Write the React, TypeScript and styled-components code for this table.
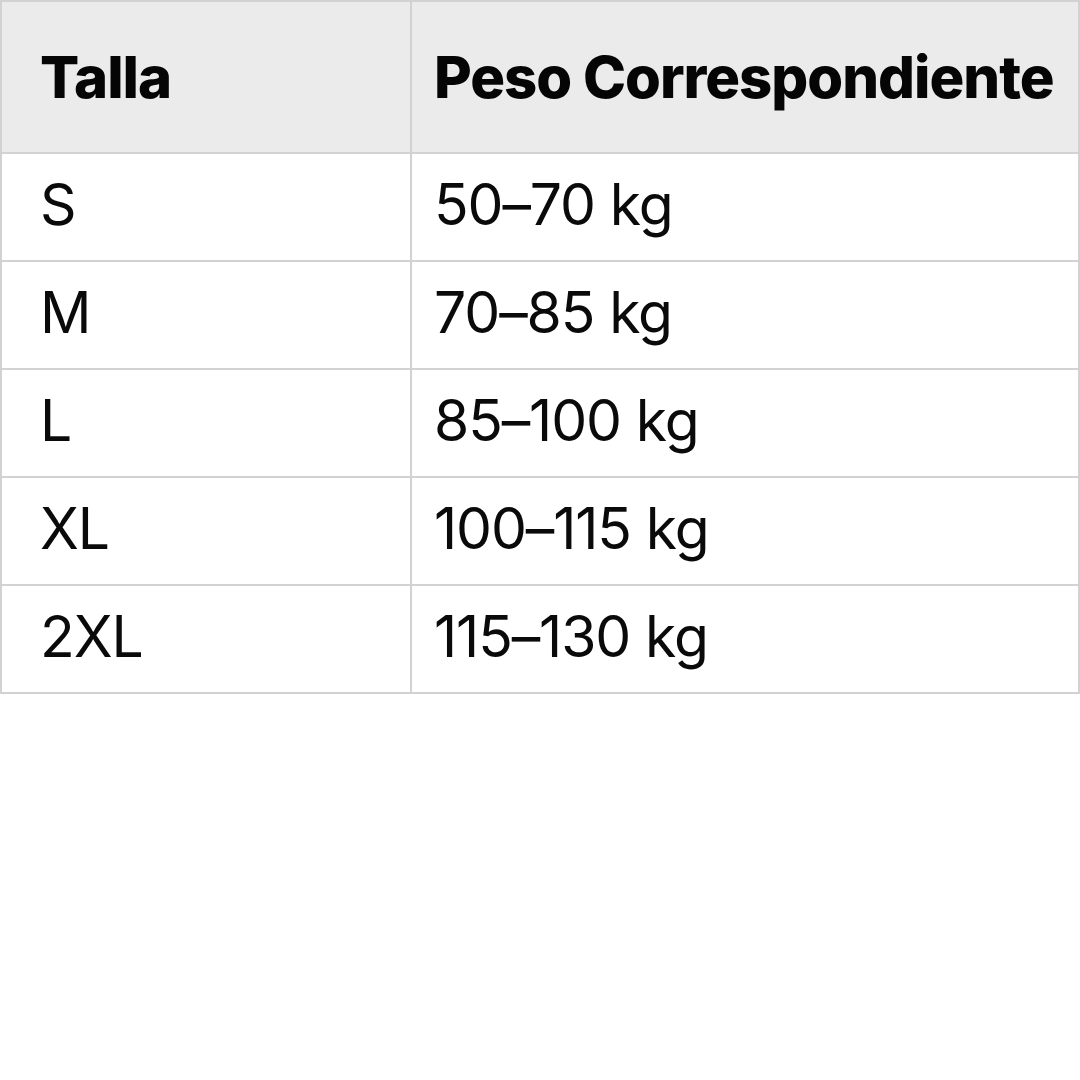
import React from 'react'
import styled, { createGlobalStyle } from 'styled-components'

const GlobalStyle = createGlobalStyle`
  html, body {
    margin: 0;
    padding: 0;
    background: #fff;
  }
  body {
    font-family: Inter, "Liberation Sans", sans-serif;
    color: #0a0a0a;
  }
`

const Page = styled.div`
  width: 1080px;
  height: 1080px;
  background: #fff;
`

const Table = styled.table`
  width: 1080px;
  border-collapse: collapse;
  table-layout: fixed;
  border: 2px solid #d2d2d2;
`

const Head = styled.th<{ first?: boolean }>`
  height: 150px;
  padding: 0 0 0 ${(p) => (p.first ? '38px' : '22px')};
  background: #ebebeb;
  border: 2px solid #d2d2d2;
  text-align: left;
  font-size: 58px;
  font-weight: 800;
  letter-spacing: -1px;
  color: #050505;
`

const Cell = styled.td<{ first?: boolean }>`
  height: 100px;
  padding: 0 0 6px ${(p) => (p.first ? '38px' : '22px')};
  border: 2px solid #d2d2d2;
  font-size: 57px;
  font-weight: 400;
  letter-spacing: -1.1px;
  color: #0a0a0a;
`

const rows = [
  ['S', '50–70 kg'],
  ['M', '70–85 kg'],
  ['L', '85–100 kg'],
  ['XL', '100–115 kg'],
  ['2XL', '115–130 kg'],
]

const App = () => (
  <Page>
    <GlobalStyle />
    <Table>
      <colgroup>
        <col style={{ width: 410 }} />
        <col />
      </colgroup>
      <thead>
        <tr>
          <Head first>Talla</Head>
          <Head>Peso Correspondiente</Head>
        </tr>
      </thead>
      <tbody>
        {rows.map(([size, weight]) => (
          <tr key={size}>
            <Cell first>{size}</Cell>
            <Cell>{weight}</Cell>
          </tr>
        ))}
      </tbody>
    </Table>
  </Page>
)

export default App
